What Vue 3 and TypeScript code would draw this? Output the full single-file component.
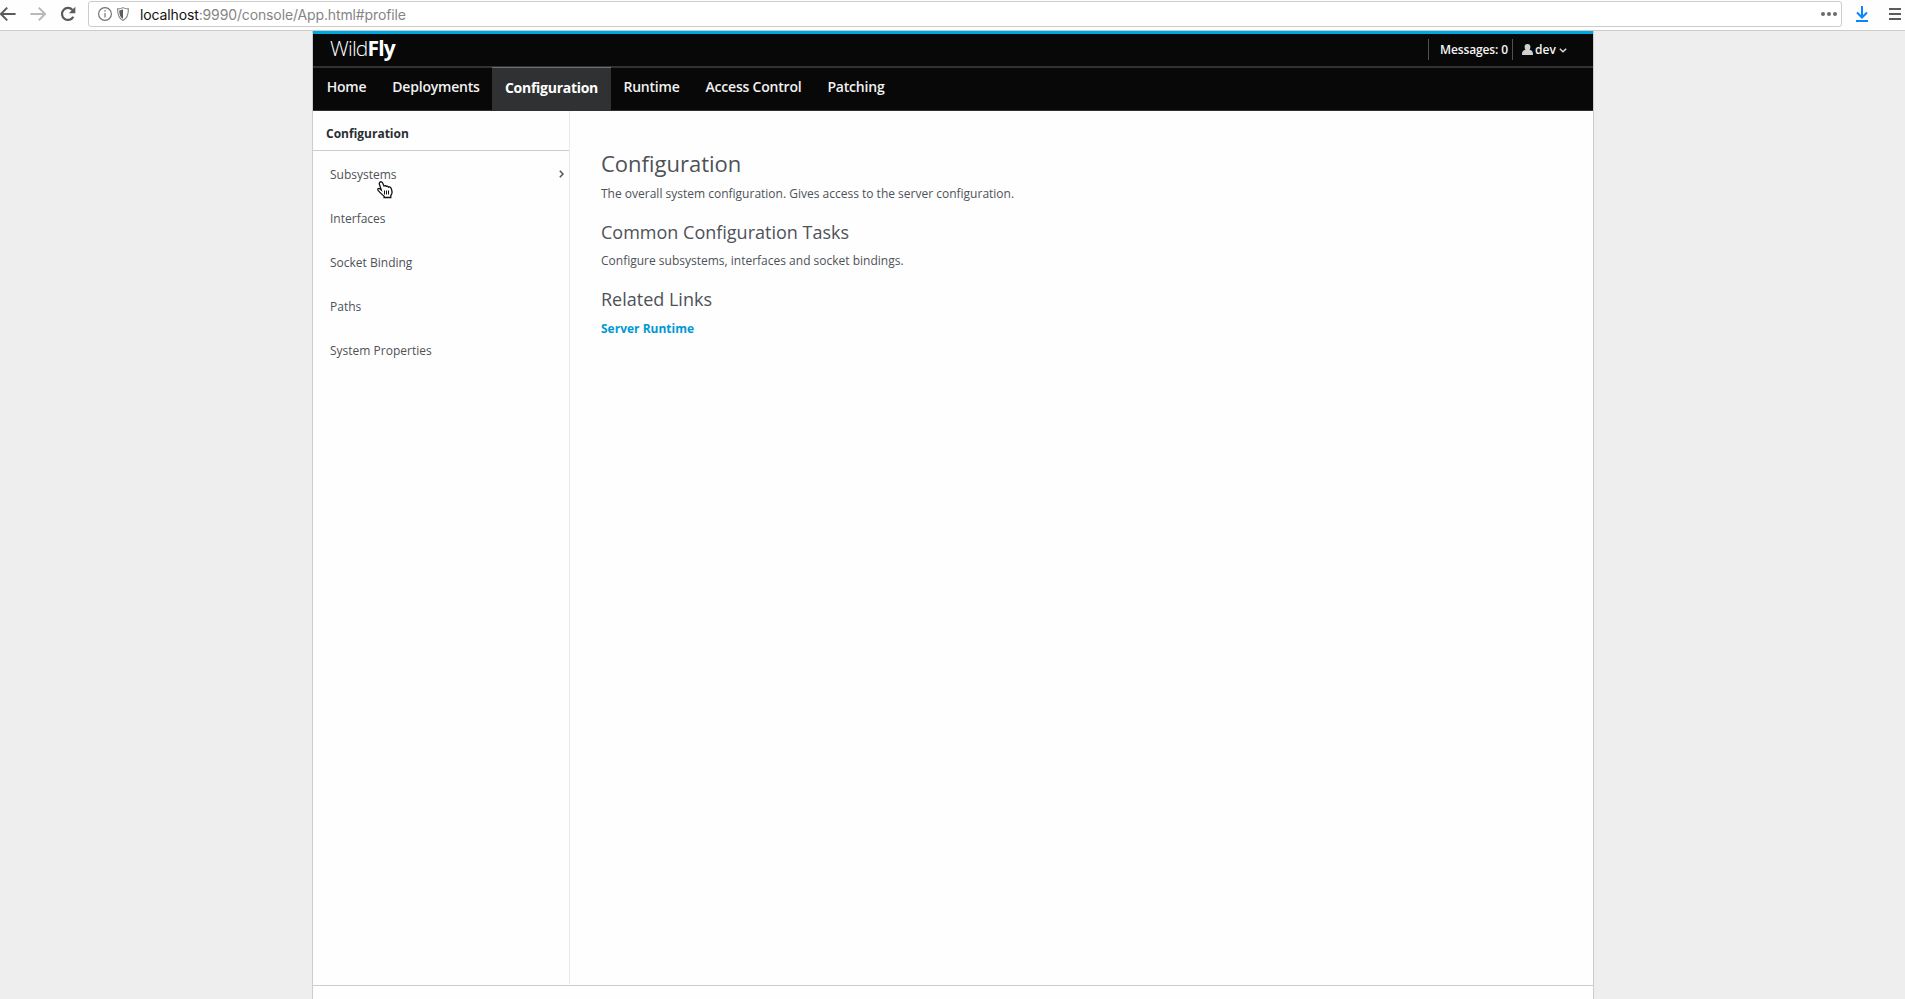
<script setup lang="ts">
import { ref } from 'vue'

interface Tab { label: string; key: string }
const tabs: Tab[] = [
  { label: 'Home', key: 'home' },
  { label: 'Deployments', key: 'deployments' },
  { label: 'Configuration', key: 'configuration' },
  { label: 'Runtime', key: 'runtime' },
  { label: 'Access Control', key: 'access' },
  { label: 'Patching', key: 'patching' },
]
const activeTab = ref('configuration')
const items = ['Subsystems', 'Interfaces', 'Socket Binding', 'Paths', 'System Properties']
</script>

<template>
  <div class="window">
    <header class="toolbar">
      <svg class="nav-icon back" viewBox="0 0 16 16"><path d="M15.600 8H1.500M7.200 1.600 1 8l6.200 6.400" /></svg>
      <svg class="nav-icon forward" viewBox="0 0 16 16"><path d="M.4 8h14.100M8.800 1.600 15 8l-6.200 6.400" /></svg>
      <svg class="nav-icon reload" viewBox="0 0 16 16"><path d="M13.300 10.700A6 6 0 1 1 12.500 4" /><path class="solid" d="M15.300.8v6.400H8.900z" /></svg>
      <div class="address">
        <svg class="info" viewBox="0 0 14 14"><circle cx="7" cy="7" r="6.400" /><path d="M7 6v4.500M7 3.300v1.500" /></svg>
        <svg class="shield" viewBox="0 0 12 14"><path class="outline" d="M6 .6C4.500 1.500 2.600 1.900.6 1.900c0 5.500 1 9.400 5.400 11.500 4.400-2.100 5.400-6 5.400-11.500-2 0-3.900-.4-5.400-1.300z" /><path class="solid" d="M6 2.300C4.900 2.900 3.600 3.300 2.200 3.400c.2 4.300 1 6.900 3.800 8.400z" /></svg>
        <span class="url"><span class="host">localhost</span>:9990/console/App.html#profile</span>
        <svg class="dots" viewBox="0 0 16 4"><circle cx="2" cy="2" r="2" /><circle cx="8" cy="2" r="2" /><circle cx="14" cy="2" r="2" /></svg>
      </div>
      <svg class="download" viewBox="0 0 12 16"><path d="M6 0v12M1 6.500l5 5 5-5M0 15h12" /></svg>
      <svg class="menu" viewBox="0 0 12 12"><path d="M0 1h12M0 6h12M0 11h12" /></svg>
    </header>

    <div class="page">
      <div class="brandbar">
        <div class="brand"><span class="wild">Wild</span><span class="fly">Fly</span></div>
        <div class="tools">
          <span class="messages">Messages: 0</span>
          <span class="user">
            <svg class="person" viewBox="0 0 11 11"><path d="M5.500 0C3.500 0 2.600 1.200 2.600 2.800c0 1.200.3 2.200.8 3C1.300 6.400.2 7.400.1 9.200L0 11h11l-.1-1.800C10.800 7.400 9.700 6.400 7.600 5.800c.5-.8.800-1.800.800-3C8.400 1.200 7.500 0 5.500 0z" /></svg>
            <span class="dev">dev</span>
            <svg class="caret" viewBox="0 0 8 5"><path d="M.8.8 4 3.800 7.200.8" /></svg>
          </span>
        </div>
      </div>

      <nav class="tabs">
        <a v-for="tab in tabs" :key="tab.key" class="tab" :class="[tab.key, { active: tab.key === activeTab }]" @click="activeTab = tab.key"><span>{{ tab.label }}</span></a>
      </nav>

      <div class="body">
        <aside class="column">
          <div class="column-title"><span>Configuration</span></div>
          <div v-for="(item, i) in items" :key="item" class="item">
            <span>{{ item }}</span>
            <svg v-if="i === 0" class="chevron" viewBox="0 0 5 8"><path d="M.8.8 4 4 .8 7.200" /></svg>
          </div>
        </aside>
        <main class="content">
          <h1><span>Configuration</span></h1>
          <p class="intro"><span>The overall system configuration. Gives access to the server configuration.</span></p>
          <h2><span>Common Configuration Tasks</span></h2>
          <p><span>Configure subsystems, interfaces and socket bindings.</span></p>
          <h2 class="related"><span>Related Links</span></h2>
          <a class="link"><span>Server Runtime</span></a>
        </main>
      </div>
      <footer class="footer"></footer>
    </div>

    <svg class="pointer" viewBox="0 0 16 18"><path d="M2.900 1.200C3.900.4 5 .8 5.500 1.800L7 5c.8-.6 1.900-.4 2.300.4.900-.5 1.900-.1 2.300.7.900-.4 2 0 2.400 1 .7 1.600 1.400 3.300.9 5.100l-1.100 2.500v1.800H7.100v-1.200C5.500 13.700 3.100 11.900 1.300 9.600.2 8.100 1.300 6.900 2.800 7.800L4.300 8.900 2.400 3.200C2.100 2.300 2.300 1.700 2.900 1.200z" /><path class="fingers" d="M7.500 9.500v4M9.500 9.500v4M11.500 9.500v4" /></svg>
  </div>
</template>

<style>
html, body { margin: 0; overflow: hidden; background: #eee; }
</style>

<style scoped>
* { box-sizing: border-box; }
.window { position: relative; width: 1905px; height: 999px; display: flex; flex-direction: column; background: #eee; font-family: "Open Sans", "Noto Sans", sans-serif; font-size: 12px; color: #4d5258; overflow: hidden; }
svg { display: block; flex: none; fill: none; }
span { white-space: nowrap; }

.toolbar { height: 31px; flex: none; display: flex; align-items: flex-start; background: #fefefe; border-bottom: 1px solid #ccc; }
.nav-icon { width: 16px; height: 16px; stroke: #5b5b5b; stroke-width: 2; margin-top: 6px; }
.forward { margin-left: 14px; stroke: #b9b9b9; }
.reload { margin-left: 14px; stroke-width: 2.200; }
.solid { fill: #5b5b5b; stroke: none; }
.address { width: 1754px; height: 26px; margin: 1px 0 0 12px; border: 1px solid #ccc; border-radius: 3px; display: flex; align-items: center; background: #fff; }
.info { width: 14px; height: 14px; margin-left: 9px; stroke: #747474; stroke-width: 1.200; }
.shield { width: 12px; height: 14px; margin-left: 5px; }
.shield .outline { stroke: #858585; stroke-width: 1.100; }
.url { margin-left: 11px; padding-top: 2px; font: 14px/22px Inter, "Liberation Sans", sans-serif; letter-spacing: -0.130px; color: #858585; }
.host { color: #111; }
.dots { width: 16px; height: 4px; margin-left: auto; margin-right: 4px; fill: #6b6b6b; }
.download { width: 12px; height: 16px; margin: 6px 0 0 14px; stroke: #0a84ff; stroke-width: 2; }
.menu { width: 12px; height: 12px; margin: 8px 0 0 21px; stroke: #5b5b5b; stroke-width: 2; }

.page { width: 1282px; margin: 0 0 0 312px; flex: 1; display: flex; flex-direction: column; background: #fefefe; border: solid #ccc; border-width: 0 1px; }
.brandbar { height: 37px; flex: none; display: flex; justify-content: space-between; background: #080808; border-top: 3px solid #00a8e1; border-bottom: 2px solid #303132; }
.brand { margin-left: 17px; font: 21px/29px "Open Sans", sans-serif; letter-spacing: -0.800px; color: #fff; display: flex; }
.wild { font-weight: 300; }
.fly { font-weight: 700; }
.tools { display: flex; height: 21px; margin: 5px 0 0; color: #f5f5f5; font-weight: 600; line-height: 21px; }
.messages { border-left: 1px solid #4d5258; padding-left: 11px; width: 84px; letter-spacing: -0.120px; }
.user { border-left: 1px solid #4d5258; padding-left: 9px; width: 81px; display: flex; }
.person { width: 11px; height: 11px; margin: 5px 2px 0 0; fill: #d1d1d1; }
.caret { width: 8px; height: 5px; margin: 9px 0 0 3px; stroke: #d8d8d8; stroke-width: 1.500; }

.tabs { height: 43px; flex: none; display: flex; background: #080808; border-bottom: 1px solid #303132; }
.tab { width: 67px; text-align: center; font-size: 14px; font-weight: 600; line-height: 37px; letter-spacing: -0.200px; color: #f1f1f1; cursor: pointer; }
.tab.deployments { width: 112px; }
.tab.configuration { width: 119px; }
.tab.runtime { width: 81px; }
.tab.access { width: 123px; }
.tab.patching { width: 82px; }
.tab.active { margin-top: -1px; height: 43px; background: #303132; border-top: 1px solid #6c706f; color: #fff; line-height: 40px; font-weight: 700; letter-spacing: -0.270px; }

.body { height: 874px; flex: none; display: flex; }
.column { width: 257px; height: 873px; border-right: 1px solid #eaeaea; }
.column-title { height: 40px; padding-left: 13px; line-height: 46px; font-weight: 700; color: #292e34; border-bottom: 1px solid #ccc; }
.item { height: 44px; padding: 0 5px 0 17px; line-height: 47px; display: flex; justify-content: space-between; }
.chevron { width: 5px; height: 8px; margin-top: 19px; stroke: #4d5258; stroke-width: 1.500; }
.content { padding: 36px 0 0 31px; }
h1, h2, p { margin: 0; font-weight: 400; }
h1 { font-size: 22px; line-height: 32px; margin-bottom: 3px; }
p { font-size: 12px; line-height: 24px; }
h2 { font-size: 18px; line-height: 24px; margin-top: 14px; margin-bottom: 5px; }
.link { display: block; font-weight: 700; color: #0099d3; line-height: 24px; margin-top: 6px; }
.footer { flex: 1; border-top: 1px solid #ccc; }
.pointer { position: absolute; left: 377px; top: 181px; width: 16px; height: 18px; fill: #fff; stroke: #111; stroke-width: 1.300; }
.fingers { stroke-width: 1; }
</style>
